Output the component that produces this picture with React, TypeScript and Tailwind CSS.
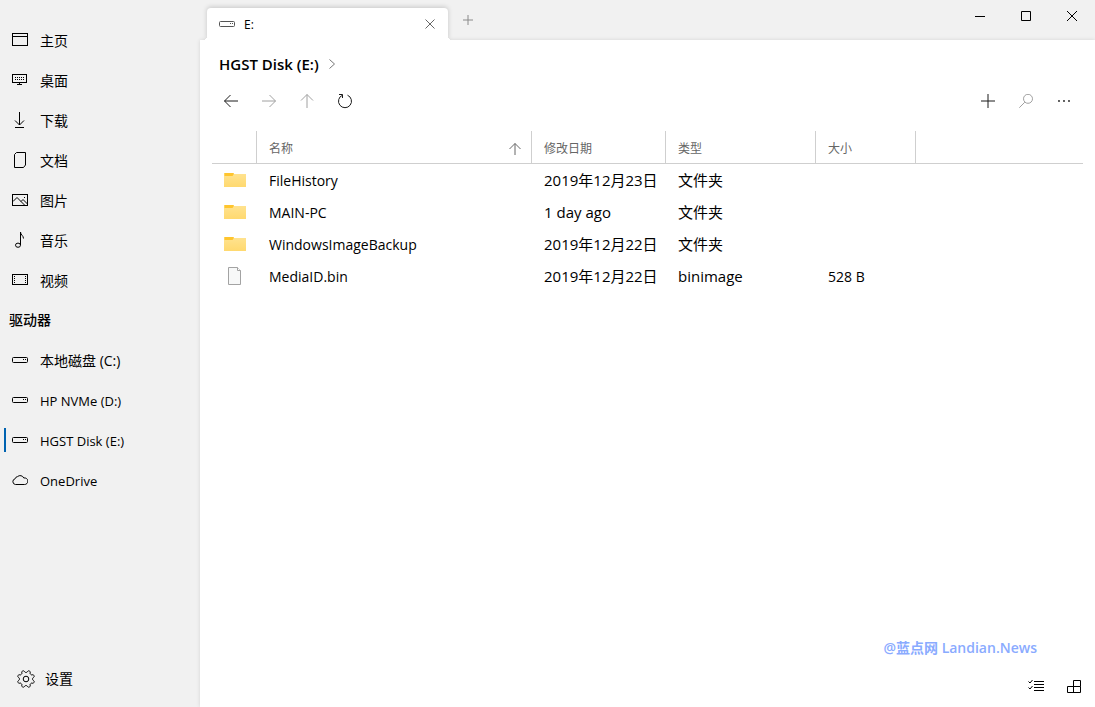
import React, { useState } from "react";

type IconName =
	| "home"
	| "desktop"
	| "download"
	| "document"
	| "picture"
	| "music"
	| "video"
	| "drive"
	| "cloud";

interface NavEntry {
	id: string;
	label: string;
	icon: IconName;
}

interface FileEntry {
	name: string;
	modified: string;
	type: string;
	size: string;
	isFolder: boolean;
}

const places: NavEntry[] = [
	{ id: "home", label: "主页", icon: "home" },
	{ id: "desktop", label: "桌面", icon: "desktop" },
	{ id: "downloads", label: "下载", icon: "download" },
	{ id: "documents", label: "文档", icon: "document" },
	{ id: "pictures", label: "图片", icon: "picture" },
	{ id: "music", label: "音乐", icon: "music" },
	{ id: "videos", label: "视频", icon: "video" }
];

const drives: NavEntry[] = [
	{ id: "c", label: "本地磁盘 (C:)", icon: "drive" },
	{ id: "d", label: "HP NVMe (D:)", icon: "drive" },
	{ id: "e", label: "HGST Disk (E:)", icon: "drive" },
	{ id: "onedrive", label: "OneDrive", icon: "cloud" }
];

const files: FileEntry[] = [
	{
		name: "FileHistory",
		modified: "2019年12月23日",
		type: "文件夹",
		size: "",
		isFolder: true
	},
	{
		name: "MAIN-PC",
		modified: "1 day ago",
		type: "文件夹",
		size: "",
		isFolder: true
	},
	{
		name: "WindowsImageBackup",
		modified: "2019年12月22日",
		type: "文件夹",
		size: "",
		isFolder: true
	},
	{
		name: "MediaID.bin",
		modified: "2019年12月22日",
		type: "binimage",
		size: "528 B",
		isFolder: false
	}
];

const glyphs: Record<IconName, React.ReactNode> = {
	home: <path d="M.5 1.5h15v12H.5zM.5 4.5h15" shapeRendering="crispEdges" />,
	desktop: (
		<g shapeRendering="crispEdges">
			<path d="M.5 2.5h14v8H.5zM7.5 11v1M5 12.5h5" />
			<path d="M3 5.5h9M3 7.5h9" strokeDasharray="1 1" />
		</g>
	),
	download: <path d="M7.5 0v13M3 8.5l4.5 4.5L12 8.5M3 15.5h9" />,
	document: <path d="M4.5.5h9v12.5l-2 2.5h-9V2.5z" strokeLinejoin="round" />,
	picture: (
		<>
			<path d="M.5 2.5h15v11H.5z" shapeRendering="crispEdges" />
			<path d="M1 9.5l4-4 8 8M9 9.5l2-2 4.5 4.5" />
			<path d="M12 5.5h1" />
		</>
	),
	music: (
		<>
			<ellipse cx="6" cy="13.2" rx="2.5" ry="2.1" />
			<path d="M8.5 13V0c0 3 3 3.5 3 6.5" />
		</>
	),
	video: (
		<g shapeRendering="crispEdges">
			<path d="M.5 2.5h15v10H.5z" />
			<path d="M2.5 4v8M13.5 4v8" strokeDasharray="1 1" />
		</g>
	),
	drive: (
		<>
			<rect x=".5" y="5.5" width="15" height="5" rx="1" />
			<path d="M11 7.5h1M13 7.5h1" />
		</>
	),
	cloud: (
		<path d="M3.4 12.5a2.9 2.9 0 0 1-.3-5.7 2.9 2.9 0 0 1 2.4-2.2A4 4 0 0 1 11.8 6a3.3 3.3 0 1 1 .6 6.5z" />
	)
};

const Icon = ({ name }: { name: IconName }) => (
	<svg
		className="w-4 h-4 shrink-0"
		viewBox="0 0 16 16"
		fill="none"
		stroke="currentColor">
		{glyphs[name]}
	</svg>
);

// Outline of the settings gear: eight flat teeth, notches on the axes
const gearPath =
	Array.from({ length: 96 }, (_, i) => {
		const angle = (i / 96) * Math.PI * 2;
		const radius = 7.6 - Math.tanh(2.5 * Math.cos(angle * 8)) * 1;
		const x = (9 + radius * Math.cos(angle)).toFixed(2);
		const y = (9 + radius * Math.sin(angle)).toFixed(2);
		return `${i === 0 ? "M" : "L"}${x} ${y}`;
	}).join("") + "z";

const Stroke = ({ d, size }: { d: string; size: number }) => (
	<svg
		width={size}
		height={size}
		viewBox={`0 0 ${size} ${size}`}
		fill="none"
		stroke="currentColor">
		<path d={d} />
	</svg>
);

const FolderIcon = () => (
	<svg width="22" height="16" viewBox="0 0 22 16">
		<defs>
			<linearGradient id="folder" x1="0" y1="0" x2="0" y2="1">
				<stop offset="0" stopColor="#ffe391" />
				<stop offset="1" stopColor="#ffd96f" />
			</linearGradient>
		</defs>
		<path d="M0 1h9l1 1h12v13H0z" fill="url(#folder)" />
		<path d="M.5 1h8.8l.7.8L8.5 4h-8z" fill="#ffc52e" />
	</svg>
);

const FileIcon = () => (
	<svg width="22" height="18" viewBox="0 0 22 18">
		<path
			d="M4.5.5h9l3 3v14h-12z"
			fill="#f7f8f8"
			stroke="#a3a3a3"
		/>
		<path d="M13.5.5v3h3" fill="#fff" stroke="#a3a3a3" />
	</svg>
);

const ToolButton = ({
	label,
	muted,
	children
}: {
	label: string;
	muted?: boolean;
	children: React.ReactNode;
}) => (
	<button
		aria-label={label}
		className={`flex w-[38px] h-[30px] items-center justify-center hover:bg-black/5 ${
			muted ? "text-[#a0a0a0]" : "text-[#1a1a1a]"
		}`}>
		{children}
	</button>
);

const App = () => {
	const [selected, setSelected] = useState("e");

	const renderNav = (entries: NavEntry[]) =>
		entries.map((entry) => (
			<li key={entry.id}>
				<button
					onClick={() => setSelected(entry.id)}
					className="relative flex w-full h-10 items-center gap-3 pl-3 text-left hover:bg-black/5">
					{selected === entry.id && (
						<span className="absolute left-1 top-2 w-0.5 h-6 bg-[#0063b1]" />
					)}
					<Icon name={entry.icon} />
					{/* Latin names run wider, so they are set a step smaller */}
					<span
						className={`pt-0.5 ${
							/^[A-Z]/.test(entry.label)
								? "text-[13px]"
								: "text-sm"
						}`}>
						{entry.label}
					</span>
				</button>
			</li>
		));

	return (
		<div className="flex min-h-screen bg-[#f1f1f1] text-black font-['Open_Sans','Noto_Sans_CJK_SC',sans-serif]">
			{/* Sidebar */}
			<nav
				lang="zh-CN"
				className="flex w-[200px] shrink-0 flex-col pt-5 pb-2 text-sm">
				<ul>{renderNav(places)}</ul>
				<h2 className="flex h-10 items-center pl-[9px] font-medium">
					驱动器
				</h2>
				<ul>{renderNav(drives)}</ul>
				<button className="mt-auto flex h-10 items-center gap-[10px] pl-[17px] hover:bg-black/5">
					<svg
						width="18"
						height="18"
						viewBox="0 0 18 18"
						fill="none"
						stroke="currentColor">
						<path d={gearPath} />
						<circle cx="9" cy="9" r="2.8" />
					</svg>
					设置
				</button>
			</nav>

			<div className="flex min-w-0 flex-1 flex-col">
				{/* Tabs and window controls */}
				<header className="flex h-10 items-start pl-[7px]">
					<div className="relative z-10 mt-2 flex h-8 w-[241px] items-center rounded-t bg-white pl-3 pr-[13px] text-[12px] shadow-[0_-1px_5px_rgba(0,0,0,0.18)] [clip-path:inset(-6px_-6px_0_-6px)]">
						<span className="absolute bottom-0 -left-1 size-1 bg-[radial-gradient(circle_at_0_0,transparent_4px,white_4px)]" />
						<span className="absolute bottom-0 -right-1 size-1 bg-[radial-gradient(circle_at_100%_0,transparent_4px,white_4px)]" />
						<span className="text-[#555]">
							<Icon name="drive" />
						</span>
						<span className="ml-[9px] pt-0.5">E:</span>
						<button
							aria-label="关闭标签页"
							className="ml-auto text-[#666]">
							<Stroke size={10} d="M.5.5l9 9M9.5.5l-9 9" />
						</button>
					</div>
					<button
						aria-label="新建标签页"
						className="flex w-10 h-10 items-center justify-center text-[#8a8a8a]">
						<Stroke size={10} d="M5 0v10M0 5h10" />
					</button>
					<div className="ml-auto flex">
						<button
							aria-label="最小化"
							className="flex w-[46px] h-8 items-center justify-center">
							<Stroke size={10} d="M0 5.5h10" />
						</button>
						<button
							aria-label="最大化"
							className="flex w-[46px] h-8 items-center justify-center">
							<Stroke size={10} d="M.5.5h9v9h-9z" />
						</button>
						<button
							aria-label="关闭"
							className="flex w-[46px] h-8 items-center justify-center">
							<Stroke size={10} d="M0 0l10 10M10 0L0 10" />
						</button>
					</div>
				</header>

				<main className="flex flex-1 flex-col bg-white px-3 pt-0.5 pb-px shadow-[0_0_4px_rgba(0,0,0,0.12)]">
					<div className="flex h-11 items-center gap-[10px] pl-[7px]">
						<h1 className="text-[15px] leading-5 font-semibold">
							HGST Disk (E:)
						</h1>
						<span className="text-[#777]">
							<Stroke size={10} d="M.5.5L5.5 5 .5 9.5" />
						</span>
					</div>

					<div className="flex">
						<ToolButton label="后退">
							<Stroke
								size={14}
								d="M14 7H.5M6.5 1L.5 7l6 6"
							/>
						</ToolButton>
						<ToolButton label="前进" muted>
							<Stroke
								size={14}
								d="M0 7h13.5M7.5 1l6 6-6 6"
							/>
						</ToolButton>
						<ToolButton label="向上" muted>
							<Stroke
								size={14}
								d="M7 14V.5M1 6.5l6-6 6 6"
							/>
						</ToolButton>
						<ToolButton label="刷新">
							<Stroke
								size={16}
								d="M2 1.5h3.5v3.5M5.5 2.2A6.5 6.5 0 1 0 10.5 2.2"
							/>
						</ToolButton>
						<div className="ml-auto flex">
							<ToolButton label="新建">
								<Stroke size={14} d="M7 0v14M0 7h14" />
							</ToolButton>
							<ToolButton label="搜索" muted>
								<Stroke
									size={14}
									d="M13.5 4.8a4.5 4.5 0 1 1-9 0 4.5 4.5 0 0 1 9 0zM5.8 8.2L.3 13.7"
								/>
							</ToolButton>
							<ToolButton label="更多">
								<svg
									width="14"
									height="14"
									fill="currentColor">
									<circle cx="2" cy="7" r=".9" />
									<circle cx="7" cy="7" r=".9" />
									<circle cx="12" cy="7" r=".9" />
								</svg>
							</ToolButton>
						</div>
					</div>

					<table
						lang="zh-CN"
						className="mt-[15px] w-full table-fixed border-separate border-spacing-0 text-left">
						<thead className="text-[12px] text-[#666]">
							<tr className="h-[33px] *:border-b *:border-[#cfcfcf] *:px-0 *:pt-[3px] *:pb-0 *:font-normal">
								<th className="w-[45px] border-r" />
								<th className="w-[275px] border-r">
									<div className="flex items-center justify-between pl-3 pr-[10px]">
										名称
										<Stroke
											size={12}
											d="M6 12V.5M.5 6L6 .5 11.5 6"
										/>
									</div>
								</th>
								<th className="w-[134px] border-r">
									<span className="pl-3">修改日期</span>
								</th>
								<th className="w-[150px] border-r">
									<span className="pl-3">类型</span>
								</th>
								<th className="w-[100px] border-r">
									<span className="pl-3">大小</span>
								</th>
								<th />
							</tr>
						</thead>
						<tbody className="leading-5">
							{files.map((file) => (
								<tr
									key={file.name}
									className="h-8 hover:bg-black/5">
									<td className="pl-3">
										{file.isFolder ? (
											<FolderIcon />
										) : (
											<FileIcon />
										)}
									</td>
									<td className="pl-3 pt-0.5 text-[14px]">
										{file.name}
									</td>
									<td className="pl-3 text-[15px]">
										{file.modified}
									</td>
									<td className="pl-3 text-[15px]">
										{file.type}
									</td>
									<td className="pl-3 pt-0.5 text-[14px]">
										{file.size}
									</td>
									<td />
								</tr>
							))}
						</tbody>
					</table>

					<footer className="mt-auto">
						<p className="pr-[46px] text-right text-[14px] leading-5 font-semibold text-[#8aabff]">
							@蓝点网 Landian.News
						</p>
						<div className="mt-2 -mr-[10px] flex h-10 items-center justify-end">
							<button
								aria-label="详细信息视图"
								className="flex w-[38px] h-10 items-center justify-center">
								<Stroke
									size={16}
									d="M6 3.5h10M6 6.5h10M6 9.5h10M6 12.5h10M.5 3.5L2 5l2.5-3M.5 9.5L2 11l2.5-3"
								/>
							</button>
							<button
								aria-label="平铺视图"
								className="flex w-[38px] h-10 items-center justify-center">
								<Stroke
									size={14}
									d="M.5 7.5h13v6H.5zM6.5 13.5v-12h7v6"
								/>
							</button>
						</div>
					</footer>
				</main>
			</div>
		</div>
	);
};

export default App;
